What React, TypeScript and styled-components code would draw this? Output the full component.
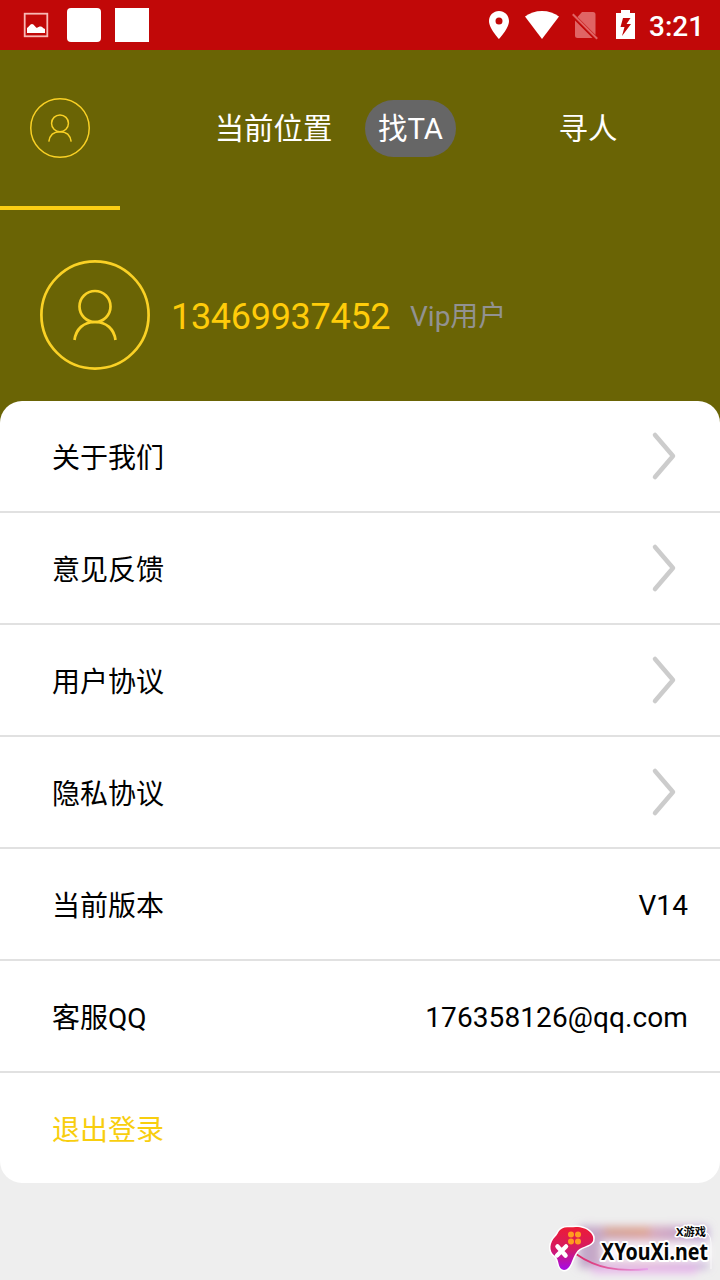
import React from 'react';
import styled, { createGlobalStyle } from 'styled-components';

const olive = '#6a6405';
const yellow = '#facd14';

const GlobalStyle = createGlobalStyle`
  * { box-sizing: border-box; }
  body {
    margin: 0;
    background: #eeeeee;
    font-family: Roboto, "Noto Sans CJK SC", sans-serif;
  }
`;

const Screen = styled.div`
  width: 720px;
  height: 1280px;
  display: flex;
  flex-direction: column;
  overflow: hidden;
  position: relative;
  background: linear-gradient(${olive} 0 440px, #eeeeee 440px);
`;

const StatusBar = styled.header`
  height: 50px;
  flex: none;
  display: flex;
  align-items: center;
  justify-content: space-between;
  padding: 0 17px 0 23px;
  background: #c10808;
  color: #fff;
`;

const StatusGroup = styled.div`
  display: flex;
  align-items: center;
`;

const PictureIcon = styled.svg`
  width: 26px;
  height: 26px;
  margin-right: 18px;
`;

const NoticeBlock = styled.span<{ $radius: number }>`
  width: 34px;
  height: 34px;
  margin-right: 14px;
  border-radius: ${(p) => p.$radius}px;
  background: #fff;
`;

const StatusIcon = styled.svg<{ $w: number; $gap: number }>`
  width: ${(p) => p.$w}px;
  height: 30px;
  margin-right: ${(p) => p.$gap}px;
`;

const Clock = styled.span`
  width: 54px;
  font-size: 28px;
  font-weight: 500;
  line-height: 32px;
  white-space: nowrap;
  padding-top: 3px;
`;

const Tabs = styled.nav`
  height: 160px;
  flex: none;
  display: flex;
  align-items: stretch;
`;

const Tab = styled.div<{ $width: number; $active?: boolean; $inset?: number }>`
  width: ${(p) => p.$width}px;
  flex: none;
  display: flex;
  justify-content: center;
  align-items: center;
  padding-left: ${(p) => p.$inset ?? 0}px;
  border-bottom: 4px solid ${(p) => (p.$active ? yellow : 'transparent')};
  color: #fff;
  font-size: 29.4px;
  white-space: nowrap;
`;

const TabLabel = styled.span`
  height: 57px;
  line-height: 58px;
`;

const Pill = styled(TabLabel)`
  width: 91px;
  border-radius: 29px;
  background: #666666;
  text-align: center;
`;

const Avatar = styled.svg<{ $size: number }>`
  width: ${(p) => p.$size}px;
  height: ${(p) => p.$size}px;
  flex: none;
`;

const Profile = styled.section`
  height: 191px;
  flex: none;
  display: flex;
  align-items: center;
  padding: 19px 40px 0;
`;

const Phone = styled.span`
  margin-left: 21px;
  width: 219px;
  padding-top: 4px;
  color: #ffcc0a;
  font-size: 36px;
  line-height: 44px;
  letter-spacing: -0.3px;
`;

const Level = styled.span`
  margin-left: 20px;
  padding-top: 4px;
  color: #929292;
  font-size: 28px;
  line-height: 40px;
`;

const Card = styled.main`
  flex: none;
  border-radius: 22px;
  background: #fff;
`;

const Row = styled.div<{ $accent?: boolean }>`
  height: 112px;
  display: flex;
  align-items: center;
  justify-content: space-between;
  padding: 0 32px 0 52px;
  border-bottom: 2px solid #e1e1e1;
  color: ${(p) => (p.$accent ? '#f8ce0e' : '#000')};
  font-size: 28px;
  line-height: 40px;
  &:last-child {
    height: 110px;
    border-bottom: 0;
  }
`;

const RowLabel = styled.span`
  padding-top: 5px;
`;

const RowValue = styled.span`
  padding-top: 4px;
  letter-spacing: 0.1px;
`;

const Arrow = styled.svg`
  width: 28px;
  height: 50px;
  margin-right: 11px;
`;

const Watermark = styled.svg`
  position: absolute;
  left: 540px;
  top: 1210px;
  width: 180px;
  height: 70px;
`;

function Person({ size }: { size: number }) {
  return (
    <Avatar $size={size} viewBox="0 0 110 110" fill="none" stroke="#fad125" strokeWidth="2.7">
      <circle cx="55" cy="55" r="53.6" />
      <circle cx="55" cy="46.5" r="15.5" />
      <path d="M34.5 80C36 69 43.5 62 55 62s19 7 20.5 18" />
    </Avatar>
  );
}

const rows: { label: string; value?: string; arrow?: boolean; accent?: boolean }[] = [
  { label: '关于我们', arrow: true },
  { label: '意见反馈', arrow: true },
  { label: '用户协议', arrow: true },
  { label: '隐私协议', arrow: true },
  { label: '当前版本', value: 'V14' },
  { label: '客服QQ', value: '176358126@qq.com' },
  { label: '退出登录', accent: true },
];

function SiteLogo() {
  const pad =
    'M20 20C24 16 30 18 36 17C47 17 55 24 53 31C50 37 39 36 36 43C32 48 31 60 24 60C17 59 20 50 15 46C8 41 10 32 15 27C18 24 18 22 20 20Z';
  return (
    <Watermark viewBox="0 0 180 70">
      <defs>
        <linearGradient id="pad" x1="0" y1="0" x2="0" y2="1">
          <stop offset="0" stopColor="#ed1c35" />
          <stop offset="0.5" stopColor="#d51b62" />
          <stop offset="1" stopColor="#a50be8" />
        </linearGradient>
        <linearGradient id="haze" x1="0" y1="0" x2="1" y2="0">
          <stop offset="0" stopColor="#b79bc4" />
          <stop offset="0.5" stopColor="#d9a2b5" />
          <stop offset="1" stopColor="#b193d0" />
        </linearGradient>
        <linearGradient id="swoosh" x1="0" y1="0" x2="1" y2="0">
          <stop offset="0" stopColor="#db2566" />
          <stop offset="1" stopColor="#e8a5ed" />
        </linearGradient>
        <filter id="soft" x="-20%" y="-40%" width="140%" height="180%">
          <feGaussianBlur stdDeviation="4" />
        </filter>
      </defs>
      <g filter="url(#soft)">
        <rect x="39" y="16" width="129" height="42" fill="url(#haze)" opacity="0.85" />
        <rect x="64" y="18" width="46" height="7" fill="#dfa26f" opacity="0.75" />
        <rect x="62" y="32" width="107" height="20" fill="#faf4fa" />
        <rect x="52" y="56" width="105" height="7" fill="#e9b6ee" />
      </g>
      <path d="M36 44C56 58 77 62 108 59" fill="none" stroke="url(#swoosh)" strokeWidth="1.8" />
      <path d="M160 21q11 0 11 12v26" fill="none" stroke="#fff" strokeWidth="1" opacity="0.8" />
      <path d={pad} fill="url(#pad)" stroke="#fff" strokeWidth="3" paintOrder="stroke" />
      <path d="M17.500 36.500l8 9M26 36.500l-9 9" stroke="#fff" strokeWidth="4.500" strokeLinecap="round" />
      <g fill="#ff9c20">
        <circle cx="31" cy="24.5" r="3" />
        <circle cx="38" cy="24.5" r="3" />
        <circle cx="31" cy="31.5" r="3" />
        <circle cx="38" cy="31.5" r="3" />
      </g>
      <g fill="#050505" stroke="#fff" strokeLinejoin="round" paintOrder="stroke">
        <text
          x="61"
          y="50"
          textLength="107"
          lengthAdjust="spacingAndGlyphs"
          fontFamily="'Noto Sans', 'Open Sans', sans-serif"
          fontWeight="700"
          fontSize="24"
          strokeWidth="4"
        >
          XYouXi.net
        </text>
        <text
          x="136"
          y="26"
          textLength="30"
          lengthAdjust="spacingAndGlyphs"
          fontFamily="'Noto Sans', 'Noto Sans CJK SC', sans-serif"
          fontWeight="700"
          fontSize="11"
          strokeWidth="3"
        >
          X游戏
        </text>
      </g>
    </Watermark>
  );
}

export default function App() {
  return (
    <Screen>
      <GlobalStyle />
      <StatusBar>
        <StatusGroup>
          <PictureIcon viewBox="0 0 26 26">
            <rect x="1.7" y="1.7" width="22.6" height="22.6" fill="none" stroke="#f8b8b4" strokeWidth="1.8" />
            <path d="M4 21v-5c2-1 3-4 5-4s3 3 5 4c2-2 5-2 6 0l2 1v4Z" fill="#fff" />
          </PictureIcon>
          <NoticeBlock $radius={4} />
          <NoticeBlock $radius={0} />
        </StatusGroup>
        <StatusGroup>
          <StatusIcon $w={20} $gap={16} viewBox="0 0 20 30">
            <path
              fill="#fff"
              fillRule="evenodd"
              d="M10 1C4.5 1 0 5.3 0 11c0 7.400 10 18 10 18s10-10.600 10-18C20 5.300 15.500 1 10 1Zm0 6.400a3.500 3.500 0 1 1 0 7 3.500 3.500 0 0 1 0-7Z"
            />
          </StatusIcon>
          <StatusIcon $w={34} $gap={13} viewBox="0 0 34 30">
            <path fill="#fff" d="M0 6.500C4.500 3 10.500 1 17 1s12.500 2 17 5.500L17 29Z" />
          </StatusIcon>
          <StatusIcon $w={26} $gap={18} viewBox="0 0 26 30">
            <path fill="#e06464" d="M10 2H21q2.500 0 2.500 2.500V25L5.500 7Zm-7 8.500L20.500 28H5.500Q3 28 3 25.500Z" />
            <path d="M.8 4.300L25.200 28.700" stroke="#e06464" strokeWidth="2" />
          </StatusIcon>
          <StatusIcon $w={19} $gap={14} viewBox="0 0 19 30">
            <path
              fill="#fff"
              fillRule="evenodd"
              d="M5 0h9v3h5v26H0V3h5ZM7 8L4.500 17h4L6 26l9-12h-4.500l4-6Z"
            />
          </StatusIcon>
          <Clock>3:21</Clock>
        </StatusGroup>
      </StatusBar>

      <Tabs>
        <Tab $width={120} $active>
          <Person size={60} />
        </Tab>
        <Tab $width={245} $inset={62}>
          <TabLabel>当前位置</TabLabel>
        </Tab>
        <Tab $width={91}>
          <Pill>找TA</Pill>
        </Tab>
        <Tab $width={264}>
          <TabLabel>寻人</TabLabel>
        </Tab>
      </Tabs>

      <Profile>
        <Person size={110} />
        <Phone>13469937452</Phone>
        <Level>Vip用户</Level>
      </Profile>

      <Card>
        {rows.map((row) => (
          <Row key={row.label} $accent={row.accent}>
            <RowLabel>{row.label}</RowLabel>
            {row.value && <RowValue>{row.value}</RowValue>}
            {row.arrow && (
              <Arrow viewBox="0 0 28 50" fill="none" stroke="#cccccc" strokeWidth="4.500" strokeLinecap="round" strokeLinejoin="round">
                <path d="M6 4L24 25L6 46" />
              </Arrow>
            )}
          </Row>
        ))}
      </Card>

      <SiteLogo />
    </Screen>
  );
}
